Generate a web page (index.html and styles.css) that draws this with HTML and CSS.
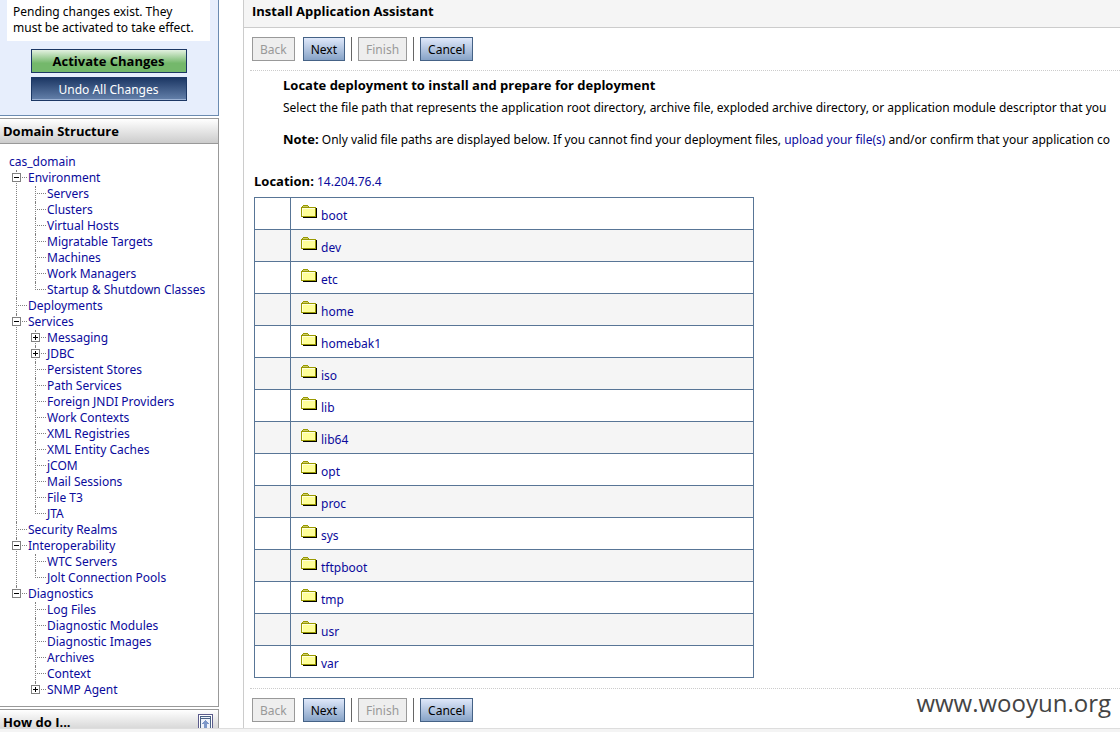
FILE: index.html
```html
<!DOCTYPE html>
<html lang="en">
<head>
    <meta charset="UTF-8">
    <meta name="viewport" content="width=device-width, initial-scale=1.0">
    <title>Install Application Assistant</title>
    <link rel="stylesheet" href="styles.css">
</head>
<body>
    <!-- Shared icons -->
    <svg class="sprite" aria-hidden="true">
        <symbol id="folder" viewBox="0 0 16 13" shape-rendering="crispEdges">
            <path d="M2 3h14v10H2z" fill="#000"/>
            <path d="M1 1h1V0h5v1h1v1h7v10H0V2h1z" fill="#999900"/>
            <path d="M2 1h5v1H2z" fill="#cccc66"/>
            <path d="M1 3h13v8H1z" fill="#ffff99"/>
            <path d="M1 3h13v1H2v7H1z" fill="#ffffe0"/>
        </symbol>
    </svg>

    <div class="page">
        <div class="sidebar">
            <div class="changes">
                <p class="changes-text">Pending changes exist. They must be activated to take effect.</p>
                <button type="button" class="change-btn activate">Activate Changes</button>
                <button type="button" class="change-btn undo">Undo All Changes</button>
            </div>

            <!-- Domain Structure -->
            <div class="panel">
                <h2 class="panel-title">Domain Structure</h2>
                <div class="tree">
                    <a href="#">cas_domain</a>
                    <ul>
                        <li><button type="button" class="toggle open" aria-label="Collapse Environment"></button><a href="#">Environment</a>
                            <ul>
                                <li><a href="#">Servers</a></li>
                                <li><a href="#">Clusters</a></li>
                                <li><a href="#">Virtual Hosts</a></li>
                                <li><a href="#">Migratable Targets</a></li>
                                <li><a href="#">Machines</a></li>
                                <li><a href="#">Work Managers</a></li>
                                <li><a href="#">Startup &amp; Shutdown Classes</a></li>
                            </ul>
                        </li>
                        <li><a href="#">Deployments</a></li>
                        <li><button type="button" class="toggle open" aria-label="Collapse Services"></button><a href="#">Services</a>
                            <ul>
                                <li><button type="button" class="toggle" aria-label="Expand Messaging"></button><a href="#">Messaging</a></li>
                                <li><button type="button" class="toggle" aria-label="Expand JDBC"></button><a href="#">JDBC</a></li>
                                <li><a href="#">Persistent Stores</a></li>
                                <li><a href="#">Path Services</a></li>
                                <li><a href="#">Foreign JNDI Providers</a></li>
                                <li><a href="#">Work Contexts</a></li>
                                <li><a href="#">XML Registries</a></li>
                                <li><a href="#">XML Entity Caches</a></li>
                                <li><a href="#">jCOM</a></li>
                                <li><a href="#">Mail Sessions</a></li>
                                <li><a href="#">File T3</a></li>
                                <li><a href="#">JTA</a></li>
                            </ul>
                        </li>
                        <li><a href="#">Security Realms</a></li>
                        <li><button type="button" class="toggle open" aria-label="Collapse Interoperability"></button><a href="#">Interoperability</a>
                            <ul>
                                <li><a href="#">WTC Servers</a></li>
                                <li><a href="#">Jolt Connection Pools</a></li>
                            </ul>
                        </li>
                        <li><button type="button" class="toggle open" aria-label="Collapse Diagnostics"></button><a href="#">Diagnostics</a>
                            <ul>
                                <li><a href="#">Log Files</a></li>
                                <li><a href="#">Diagnostic Modules</a></li>
                                <li><a href="#">Diagnostic Images</a></li>
                                <li><a href="#">Archives</a></li>
                                <li><a href="#">Context</a></li>
                                <li><button type="button" class="toggle" aria-label="Expand SNMP Agent"></button><a href="#">SNMP Agent</a></li>
                            </ul>
                        </li>
                    </ul>
                </div>
            </div>

            <!-- How do I... -->
            <div class="panel">
                <h2 class="panel-title">How do I...
                    <button type="button" class="restore" aria-label="Restore">
                        <svg width="15" height="16" viewBox="0 0 15 16" shape-rendering="crispEdges">
                            <path d="M0 0h15v16H0z" fill="#5c5c8c"/>
                            <path d="M1 1h13v14H1z" fill="#fff"/>
                            <path d="M2 2h11v12H2z" fill="#4a6285"/>
                            <path d="M3 3h9v1H3zM3 5h9v9H3z" fill="#eef2fa"/>
                            <path d="M7 6h1v1h1v1h1v1h1v1H9v4H6v-4H4V9h1V8h1V7h1z" fill="#7d98c9"/>
                        </svg>
                    </button>
                </h2>
            </div>
        </div>

        <div class="content">
            <h1 class="content-title">Install Application Assistant</h1>
            <div class="buttons">
                <button type="button" class="btn" disabled>Back</button>
                <button type="button" class="btn">Next</button>
                <span class="separator"></span>
                <button type="button" class="btn" disabled>Finish</button>
                <span class="separator"></span>
                <button type="button" class="btn">Cancel</button>
            </div>

            <div class="assistant">
                <div class="intro">
                    <h3>Locate deployment to install and prepare for deployment</h3>
                    <p>Select the file path that represents the application root directory, archive file, exploded archive directory, or application module descriptor that you</p>
                    <p><b>Note:</b> Only valid file paths are displayed below. If you cannot find your deployment files, <a href="#">upload your file(s)</a> and/or confirm that your application co</p>
                </div>
                <p class="location"><b>Location:</b> <a href="#">14.204.76.4</a></p>
                <table class="files">
                    <tr><td></td><td><svg class="folder"><use href="#folder"/></svg><a href="#">boot</a></td></tr>
                    <tr><td></td><td><svg class="folder"><use href="#folder"/></svg><a href="#">dev</a></td></tr>
                    <tr><td></td><td><svg class="folder"><use href="#folder"/></svg><a href="#">etc</a></td></tr>
                    <tr><td></td><td><svg class="folder"><use href="#folder"/></svg><a href="#">home</a></td></tr>
                    <tr><td></td><td><svg class="folder"><use href="#folder"/></svg><a href="#">homebak1</a></td></tr>
                    <tr><td></td><td><svg class="folder"><use href="#folder"/></svg><a href="#">iso</a></td></tr>
                    <tr><td></td><td><svg class="folder"><use href="#folder"/></svg><a href="#">lib</a></td></tr>
                    <tr><td></td><td><svg class="folder"><use href="#folder"/></svg><a href="#">lib64</a></td></tr>
                    <tr><td></td><td><svg class="folder"><use href="#folder"/></svg><a href="#">opt</a></td></tr>
                    <tr><td></td><td><svg class="folder"><use href="#folder"/></svg><a href="#">proc</a></td></tr>
                    <tr><td></td><td><svg class="folder"><use href="#folder"/></svg><a href="#">sys</a></td></tr>
                    <tr><td></td><td><svg class="folder"><use href="#folder"/></svg><a href="#">tftpboot</a></td></tr>
                    <tr><td></td><td><svg class="folder"><use href="#folder"/></svg><a href="#">tmp</a></td></tr>
                    <tr><td></td><td><svg class="folder"><use href="#folder"/></svg><a href="#">usr</a></td></tr>
                    <tr><td></td><td><svg class="folder"><use href="#folder"/></svg><a href="#">var</a></td></tr>
                </table>
            </div>

            <div class="buttons">
                <button type="button" class="btn" disabled>Back</button>
                <button type="button" class="btn">Next</button>
                <span class="separator"></span>
                <button type="button" class="btn" disabled>Finish</button>
                <span class="separator"></span>
                <button type="button" class="btn">Cancel</button>
            </div>
        </div>
    </div>
    <div class="status-bar"></div>
    <div class="watermark">www.wooyun.org</div>
</body>
</html>
```

FILE: styles.css
```css
* {
    box-sizing: border-box;
}
body {
    display: flex;
    flex-direction: column;
    height: 100vh;
    margin: 0;
    overflow: hidden;
    background: #fff;
    color: #000;
    font-family: "Noto Sans", sans-serif;
    font-size: 12px;
    line-height: 16px;
}
h1, h2, h3, p, ul {
    margin: 0;
    padding: 0;
    font-size: inherit;
}
button {
    font: inherit;
    padding: 0;
}
a {
    color: #0a0a9c;
    text-decoration: none;
}
h1, h2, h3, b, .activate {
    font-family: "Open Sans", sans-serif;
    font-size: 13px;
    font-weight: bold;
}
.sprite {
    position: absolute;
    width: 0;
    height: 0;
}
.page {
    display: flex;
    flex: 1;
    gap: 24px;
    min-height: 0;
    overflow: hidden;
}

/* Left column */
.sidebar {
    display: flex;
    flex-direction: column;
    flex: none;
    gap: 2px;
    width: 219px;
}
.changes {
    display: flex;
    flex-direction: column;
    align-items: center;
    gap: 4px;
    padding: 0 8px 14px 7px;
    background: #e7eefc;
    border: solid #6b8bb0;
    border-width: 0 1px 1px 0;
}
.changes-text {
    align-self: stretch;
    margin-bottom: 4px;
    padding: 4px 6px 5px;
    background: #fff;
}
.change-btn {
    width: 156px;
    height: 24px;
    border: 1px solid #1c3764;
}
.activate {
    background: linear-gradient(#e3f1e0, #74b86b 60%, #74b86b);
}
.undo {
    padding-top: 1px;
    color: #fff;
    background: linear-gradient(#1c3764, #6581ab);
    box-shadow: inset 0 -1px #9cb2d4;
}
.panel {
    flex: none;
    border: solid #999;
    border-width: 1px 1px 1px 0;
}
.panel-title {
    display: flex;
    justify-content: space-between;
    height: 25px;
    padding: 4px 5px 4px 3px;
    background: linear-gradient(#fff, #ccc);
    border-bottom: 1px solid #999;
}
.restore {
    height: 16px;
    border: 0;
    background: none;
}
.restore svg {
    display: block;
}

/* Domain tree */
.tree {
    padding: 10px 0 8px;
}
.tree > a {
    display: block;
    padding-left: 9px;
}
.tree > ul {
    padding-left: 9px;
}
.tree ul {
    list-style: none;
}
.tree li {
    position: relative;
    padding-left: 19px;
}
.tree li > a {
    display: block;
}
.tree li::before,
.tree li::after {
    content: "";
    position: absolute;
    left: 7px;
}
.tree li::before {
    top: 0;
    bottom: 0;
    border-left: 1px dotted #808080;
}
.tree li:last-child::before {
    bottom: auto;
    height: 8px;
}
.tree li::after {
    top: 7px;
    width: 11px;
    border-top: 1px dotted #808080;
}
.toggle {
    position: absolute;
    z-index: 1;
    top: 3px;
    left: 3px;
    width: 9px;
    height: 9px;
    border: 1px solid #808080;
    background:
        linear-gradient(#000, #000) center / 5px 1px no-repeat,
        linear-gradient(#000, #000) center / 1px 5px no-repeat,
        #fff;
}
.toggle.open {
    background: linear-gradient(#000, #000) center / 5px 1px no-repeat, #fff;
}

/* Right column */
.content {
    flex: 1;
    min-width: 0;
    border-left: 1px solid #ccc;
}
.content-title {
    height: 28px;
    padding: 3px 8px;
    background: #f5f5f5;
    border-bottom: 1px solid #ccc;
}
.buttons {
    display: flex;
    gap: 6px;
    padding: 9px 8px;
}
.btn {
    height: 24px;
    padding: 1px 7px 0;
    border: 1px solid #456286;
    background: linear-gradient(#dfe8fa, #87a3c7);
    color: #000;
}
.btn:disabled {
    border-color: #999;
    background: #eee;
    color: #999;
}
.btn:disabled + .btn {
    margin-left: 2px;
}
.separator {
    width: 1px;
    background: #666;
}
.assistant {
    margin-left: 6px;
    padding: 6px 0 10px 4px;
    border: dotted #ccc;
    border-width: 1px 0;
}
.intro {
    padding-left: 29px;
    white-space: nowrap;
}
.intro h3 {
    margin-bottom: 7px;
}
.intro p {
    margin-bottom: 15px;
}
.location {
    margin: 25px 0 7px;
}
.files {
    width: 500px;
    border-collapse: collapse;
}
.files td {
    height: 32px;
    padding: 2px 10px 0;
    border: 1px solid #587596;
}
.files td:first-child {
    width: 36px;
}
.files tr:nth-child(even) {
    background: #f5f5f5;
}
.folder {
    width: 16px;
    height: 13px;
    margin-right: 4px;
    vertical-align: 2px;
}
.status-bar {
    flex: none;
    height: 4px;
    background: #f4f4f4;
    border-top: 1px solid #ddd;
}
.watermark {
    position: absolute;
    right: 9px;
    bottom: 12px;
    color: #444;
    font-family: "Open Sans", sans-serif;
    font-size: 24px;
    line-height: 34px;
}
```
